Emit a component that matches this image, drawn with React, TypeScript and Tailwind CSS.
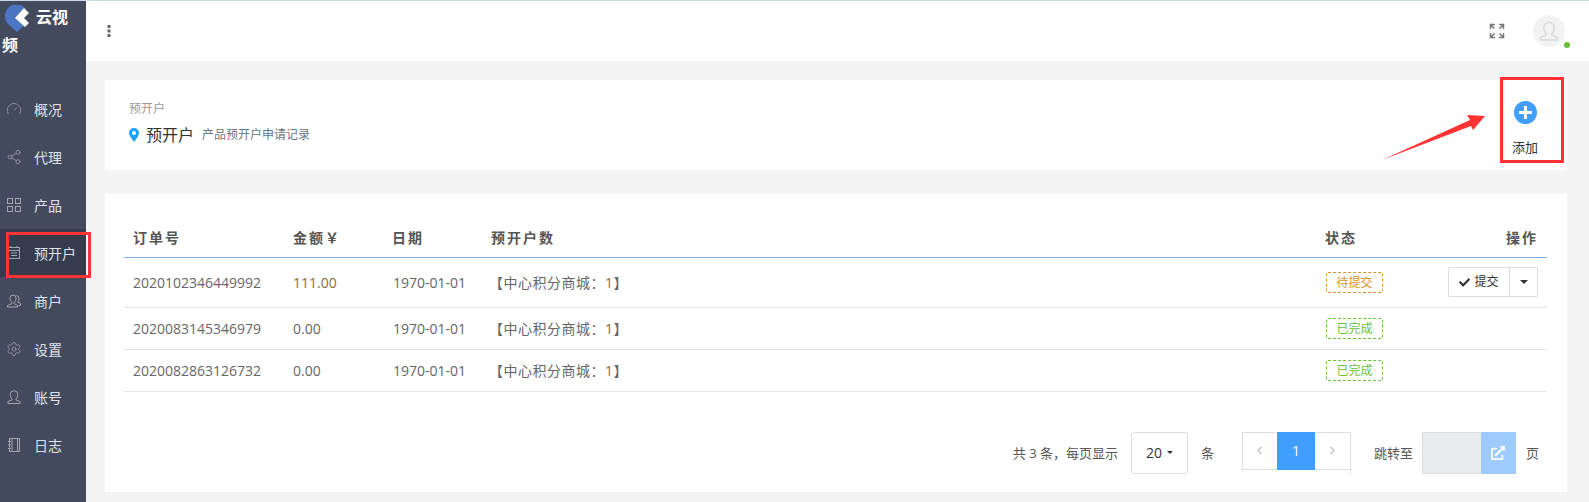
import React from 'react'
import { Gauge, Share2, Settings, ChevronLeft, ChevronRight } from 'lucide-react'
import { FaCheck, FaExternalLinkAlt } from 'react-icons/fa'

const font = { fontFamily: '"Open Sans", "Noto Sans CJK SC", sans-serif' }

const GridIcon = () => (
    <svg viewBox="0 0 16 16" className="w-[16px] h-[16px]" fill="none" stroke="#a0a4af" strokeWidth="1">
        <rect x="1.5" y="1.5" width="5" height="5" />
        <rect x="9.5" y="1.5" width="5" height="5" />
        <rect x="1.5" y="9.5" width="5" height="5" />
        <rect x="9.5" y="9.5" width="5" height="5" />
    </svg>
)

const TableIcon = () => (
    <svg viewBox="0 0 16 16" className="w-[16px] h-[16px]" fill="none" stroke="#a0a4af" strokeWidth="1">
        <rect x="2.5" y="2.5" width="11" height="11" />
        <path d="M2.5 5.5h11M5 8h6M5 10.5h6M5 1v2M11 1v2" />
    </svg>
)

const MerchantIcon = () => (
    <svg viewBox="0 0 16 16" className="w-[16px] h-[16px]" fill="none" stroke="#a0a4af" strokeWidth="1">
        <path d="M6 9.5C4.5 8.5 4 7 4 5a3 3 0 0 1 6 0c0 2-.5 3.500-2 4.500v1l3.500 2v1.500h-10V12.500l4.500-2z" />
        <path d="M10.500 2.500a3 3 0 0 1 2.500 3c0 1.500-.5 2.500-1.500 3.500l3 1.500v2h-2" />
    </svg>
)

const UserIcon = ({ className = 'w-[16px] h-[16px]', stroke = '#a0a4af' }: { className?: string; stroke?: string }) => (
    <svg viewBox="0 0 16 16" className={className} fill="none" stroke={stroke} strokeWidth="1">
        <path d="M6 10c-1.200-1-1.800-2.500-1.800-4.500a3.800 3.800 0 0 1 7.600 0c0 2-.6 3.500-1.800 4.500v1l4 1.500v2h-12v-2l4-1.500z" />
    </svg>
)

const NotebookIcon = () => (
    <svg viewBox="0 0 16 16" className="w-[16px] h-[16px]" fill="none" stroke="#a0a4af" strokeWidth="1">
        <rect x="3.500" y="1.500" width="10" height="13" />
        <path d="M6 1.500v13M2 4.500h3M2 8h3M2 11.500h3M11.500 1.500v13" />
    </svg>
)

const lucideProps = { size: 16, strokeWidth: 1.1, className: 'text-[#a0a4af]' }

const navItems = [
    { label: '概况', icon: <Gauge {...lucideProps} /> },
    { label: '代理', icon: <Share2 {...lucideProps} /> },
    { label: '产品', icon: <GridIcon /> },
    { label: '预开户', icon: <TableIcon />, active: true },
    { label: '商户', icon: <MerchantIcon /> },
    { label: '设置', icon: <Settings {...lucideProps} /> },
    { label: '账号', icon: <UserIcon /> },
    { label: '日志', icon: <NotebookIcon /> },
]

const rows = [
    { no: '2020102346449992', amount: '111.00', pending: true },
    { no: '2020083145346979', amount: '0.00' },
    { no: '2020082863126732', amount: '0.00' },
]

const Logo = () => (
    <svg viewBox="0 0 24 28" className="inline-block w-[24px] h-[28px] align-middle ml-[3px] mr-[7px]">
        <path d="M12 27 L3 19 A11.500 11.500 0 1 1 20 3 L12 13 L21 19 Z" fill="#4a76c4" />
        <path d="M10 13 L19 3 L24 8 L19 13 L24 18 L20 22 Z" fill="#fff" />
    </svg>
)

const Sidebar = () => (
    <aside className="w-[86px] shrink-0 bg-[#434a5d] text-white">
        <div className="h-[84px] pl-[2px] pr-[14px] pt-[4px] text-[16px] leading-[24px] font-bold">
            <Logo />云视频
        </div>
        <nav>
            {navItems.map((item) => (
                <div
                    key={item.label}
                    className={`h-[48px] flex items-center pl-[6px] gap-[12px] text-[14px] text-[#dfe2e8] ${item.active ? 'bg-[#363c4d]' : ''}`}
                >
                    {item.icon}
                    <span>{item.label}</span>
                </div>
            ))}
        </nav>
    </aside>
)

const Header = () => (
    <header className="h-[60px] bg-white flex items-center justify-between pl-[21px] pr-[24px]">
        <svg viewBox="0 0 4 12" className="w-[4px] h-[12px]" fill="#666">
            <rect x="0.5" y="0" width="3" height="3" />
            <rect x="0.5" y="4.5" width="3" height="3" />
            <rect x="0.5" y="9" width="3" height="3" />
        </svg>
        <div className="flex items-center gap-[28px]">
            <svg viewBox="0 0 16 16" className="w-[16px] h-[16px]" fill="none" stroke="#777" strokeWidth="1.500">
                <path d="M1.500 6V1.500H6M1.500 1.500l4 4M14.500 6V1.500H10M14.500 1.500l-4 4M1.500 10v4.500H6M1.500 14.500l4-4M14.500 10v4.500H10M14.500 14.500l-4-4" />
            </svg>
            <div className="relative w-[32px] h-[32px] rounded-full bg-[#f2f2f2] flex items-center justify-center">
                <UserIcon className="w-[22px] h-[22px]" stroke="#d8d8d8" />
                <span className="absolute right-[-5px] bottom-[-1px] w-[6px] h-[6px] rounded-full bg-[#67c23a]" />
            </div>
        </div>
    </header>
)

const TitleCard = () => (
    <section className="h-[90px] bg-white flex items-stretch justify-between pl-[24px] pr-[21px]">
        <div className="pt-[21px]">
            <div className="text-[12px] leading-[16px] text-[#999]">预开户</div>
            <div className="flex items-center mt-[6px] h-[24px]">
                <svg viewBox="0 0 10 14" className="w-[10px] h-[14px] mr-[7px]">
                    <path d="M5 0a5 5 0 0 1 5 5c0 3-3 6-5 9C3 11 0 8 0 5a5 5 0 0 1 5-5zm0 3a2 2 0 1 0 0 4 2 2 0 0 0 0-4z" fill="#1aa3ff" />
                </svg>
                <span className="text-[16px] text-[#333]">预开户</span>
                <span className="text-[12px] text-[#6c757d] ml-[8px]">产品预开户申请记录</span>
            </div>
        </div>
        <div className="flex flex-col items-center w-[42px] pt-[21px]">
            <span className="w-[23px] h-[23px] rounded-full bg-[#409eff] flex items-center justify-center">
                <svg viewBox="0 0 13 13" className="w-[13px] h-[13px]" fill="#fff">
                    <path d="M5 0h3v5h5v3H8v5H5V8H0V5h5z" />
                </svg>
            </span>
            <span className="text-[13px] text-[#333] mt-[15px] leading-[16px]">添加</span>
        </div>
    </section>
)

const StatusTag = ({ pending }: { pending?: boolean }) => (
    <span
        className={`inline-flex items-center justify-center w-[57px] h-[21px] border border-dashed rounded-[2px] text-[12px] ${pending ? 'border-[#d8942a] text-[#d8942a]' : 'border-[#67c23a] text-[#67c23a]'}`}
    >
        {pending ? '待提交' : '已完成'}
    </span>
)

const DataTable = () => (
    <table className="w-full table-fixed border-collapse text-[14px] text-[#666]">
        <colgroup>
            <col className="w-[160px]" />
            <col className="w-[99px]" />
            <col className="w-[99px]" />
            <col />
            <col className="w-[100px]" />
            <col className="w-[131px]" />
        </colgroup>
        <thead>
            <tr className="h-[49px] border-b border-[#7fb0ea] text-[#555] font-bold tracking-[2px]">
                <th className="pl-[9px] pt-[11px] text-left">订单号</th>
                <th className="pl-[9px] pt-[11px] text-left">金额￥</th>
                <th className="pl-[9px] pt-[11px] text-left">日期</th>
                <th className="pl-[9px] pt-[11px] text-left">预开户数</th>
                <th className="pl-[9px] pt-[11px] text-left">状态</th>
                <th className="pr-[9px] pt-[11px] text-right">操作</th>
            </tr>
        </thead>
        <tbody>
            {rows.map((row) => (
                <tr key={row.no} className={`border-b border-[#e6e6e6] ${row.pending ? 'h-[50px]' : 'h-[42px]'}`}>
                    <td className="pl-[9px]">{row.no}</td>
                    <td className={`pl-[9px] ${row.pending ? 'text-[#8a6d3b]' : ''}`}>{row.amount}</td>
                    <td className="pl-[10px]">1970-01-01</td>
                    <td className="pl-[7px] tracking-[0.5px]">【中心积分商城：<span className="text-[#8a6d3b]">1</span>】</td>
                    <td className="pl-[10px]"><StatusTag pending={row.pending} /></td>
                    <td className="pr-[9px]">
                        {row.pending && (
                            <div className="flex justify-end">
                                <div className="flex h-[30px] border border-[#ddd] rounded-[2px] text-[12px] text-[#333]">
                                    <span className="w-[61px] flex items-center justify-center gap-[4px] border-r border-[#ddd]">
                                        <FaCheck size={11} />提交
                                    </span>
                                    <span className="w-[27px] flex items-center justify-center">
                                        <span className="w-0 h-0 border-x-[4px] border-x-transparent border-t-[4px] border-t-[#333]" />
                                    </span>
                                </div>
                            </div>
                        )}
                    </td>
                </tr>
            ))}
        </tbody>
    </table>
)

const Pagination = () => (
    <div className="flex items-start justify-end mt-[40px] pr-[8px] text-[13px] text-[#555]">
        <span className="leading-[42px]">共 3 条，每页显示</span>
        <span className="ml-[13px] w-[57px] h-[42px] border border-[#ddd] rounded-[3px] flex items-center justify-center gap-[5px] text-[14px] text-[#333]">
            20
            <span className="w-0 h-0 border-x-[3px] border-x-transparent border-t-[3px] border-t-[#333]" />
        </span>
        <span className="ml-[13px] leading-[42px]">条</span>
        <div className="ml-[28px] flex h-[38px]">
            <span className="w-[35px] border border-r-0 border-[#ddd] flex items-center justify-center text-[#bbb]">
                <ChevronLeft size={13} />
            </span>
            <span className="w-[38px] bg-[#409eff] text-white text-[14px] flex items-center justify-center">1</span>
            <span className="w-[36px] h-[42px] border-r border-[#ddd] relative">
                <span className="absolute inset-x-0 top-0 h-[38px] border-y border-[#ddd] flex items-center justify-center text-[#bbb]">
                    <ChevronRight size={13} />
                </span>
            </span>
        </div>
        <span className="ml-[23px] leading-[42px]">跳转至</span>
        <span className="ml-[9px] w-[59px] h-[42px] bg-[#e9ecef] border border-r-0 border-[#ddd]" />
        <span className="w-[35px] h-[42px] bg-[#9ecbff] flex items-center justify-center text-white">
            <FaExternalLinkAlt size={14} />
        </span>
        <span className="ml-[10px] leading-[42px]">页</span>
    </div>
)

export default function App() {
    return (
        <div className="relative flex h-[502px] overflow-hidden border-t border-[#cdd8ea] bg-[#f4f4f4]" style={font}>
            <Sidebar />
            <main className="flex-1 min-w-0">
                <Header />
                <div className="pl-[19px] pr-[22px] pt-[19px]">
                    <TitleCard />
                    <section className="h-[298px] mt-[24px] bg-white pl-[19px] pr-[20px] pt-[14px]">
                        <DataTable />
                        <Pagination />
                    </section>
                </div>
            </main>

            {/* red marks drawn on top of the screenshot */}
            <div className="absolute left-[6px] top-[231px] w-[85px] h-[46px] border-[3px] border-[#ff3333]" />
            <div className="absolute left-[1500px] top-[76px] w-[64px] h-[86px] border-[3px] border-[#ff3333]" />
            <svg viewBox="0 0 110 50" className="absolute left-[1382px] top-[112px] w-[110px] h-[50px]">
                <path d="M0 47 L88 7 L85 2 L103 3 L91 17 L89 13 Z" fill="#ff3333" />
            </svg>
        </div>
    )
}
